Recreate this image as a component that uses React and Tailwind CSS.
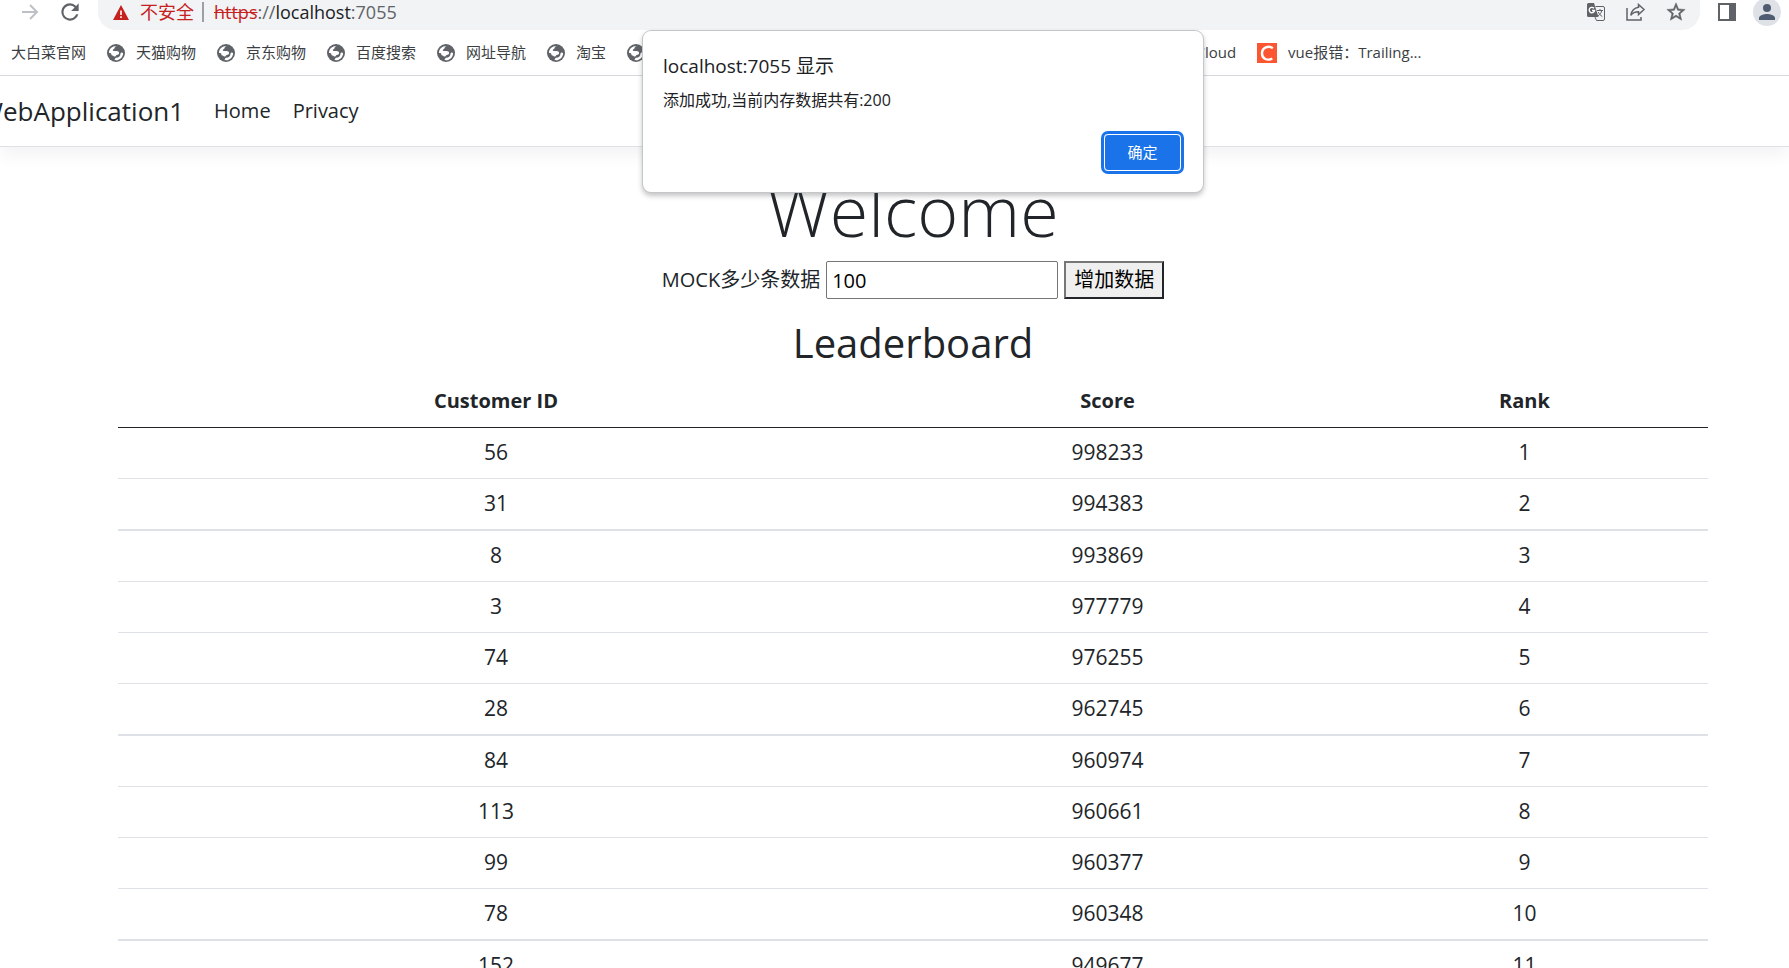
import React from "react";

const rows = [
  [56, 998233, 1],
  [31, 994383, 2],
  [8, 993869, 3],
  [3, 977779, 4],
  [74, 976255, 5],
  [28, 962745, 6],
  [84, 960974, 7],
  [113, 960661, 8],
  [99, 960377, 9],
  [78, 960348, 10],
  [152, 949677, 11],
];

const iconButton = "flex size-6 items-center justify-center";

function Globe() {
  return (
    <svg viewBox="0 0 18 18" className="size-[18px] shrink-0" aria-hidden="true">
      <circle cx="9" cy="9" r="9" fill="#5f6368" />
      <path
        d="M9.500 1.900C8.300 2.500 7.600 3.200 7.600 4.100c0 .8-.9 1-1.500 1.400-.6.500-.2 1.500.6 1.500h2.800c1.700 0 2.600.9 2.600 2.100 0 1.500-1.300 1.800-2.300 2-1 .2-1 1.500-1.700 1.500-1.200 0-1.600-1.100-2.600-1.200-1-.1-1.200-.7-1.200-1.500 0-.6-.8-.9-2.300-1C1.900 4.900 5 1.900 9.500 1.900zM7 15.800c.7-.1 1-.5 1.200-1.300.3-.9 1.600-.6 2.500-1 1.600-.6 2.700-1.800 2.700-3.600 0-.9.700-1.500 1.500-1.500.5 0 .9.300 1.200.8-.1 3.800-3.200 7.100-7.100 7.100-.7 0-1.300-.2-2-.5z"
        fill="#fff"
      />
    </svg>
  );
}

function Bookmark({ children, icon = <Globe /> }) {
  return (
    <a href="#" className="flex shrink-0 items-center gap-[11px] whitespace-nowrap">
      {icon}
      {children && <span>{children}</span>}
    </a>
  );
}

function Toolbar() {
  return (
    <div className="flex h-[30px] items-start overflow-hidden pr-2">
      <button aria-label="Forward" className="ml-[18px] flex h-6 w-6 items-center justify-center">
        <svg viewBox="0 0 24 24" className="size-6" fill="none" stroke="#bdc1c6" strokeWidth="2">
          <path d="M4 12h15M12 5l7 7-7 7" />
        </svg>
      </button>
      <button aria-label="Reload" className="ml-4 flex h-6 w-6 items-center justify-center">
        <svg viewBox="0 0 24 24" className="size-[26px] shrink-0" fill="#5f6368">
          <path d="M17.650 6.350A7.960 7.960 0 0 0 12 4a8 8 0 1 0 7.730 10h-2.080A6 6 0 1 1 12 6c1.660 0 3.140.690 4.220 1.780L13 11h7V4z" />
        </svg>
      </button>
      <div className="-mt-[6px] ml-4 flex h-9 flex-1 items-center rounded-b-[18px] bg-[#f1f3f4] pr-3 pl-[15px] text-lg leading-6">
        <svg viewBox="0 0 16 15" className="mr-[11px] h-[15px] w-4" aria-hidden="true">
          <path d="M8 0l8 15H0z" fill="#c5221f" />
          <path d="M7.200 5.500h1.600v4.500H7.200zM7.200 11.300h1.600v1.700H7.200z" fill="#fff" />
        </svg>
        <span className="text-[#c5221f]">不安全</span>
        <span className="mr-[10px] ml-2 h-5 w-[2px] bg-[#9aa0a6]" />
        <span className="flex-1 text-[#5f6368]">
          <span className="text-[#c5221f] line-through">https</span>://
          <span className="text-[#202124]">localhost</span>:7055
        </span>
        <div className="flex items-center gap-4">
          <button aria-label="Translate" className={iconButton}>
            <svg viewBox="0 0 18 18" className="size-[18px]">
              <path d="M8.500 3.500H16a1.500 1.500 0 0 1 1.500 1.500v11a1.500 1.500 0 0 1-1.500 1.500H9.500L8 14" fill="none" stroke="#5f6368" />
              <path d="M1.500 0H7l4.500 14H1.500A1.500 1.500 0 0 1 0 12.500v-11A1.500 1.500 0 0 1 1.500 0z" fill="#5f6368" />
              <path d="M7 5.300a2.700 2.700 0 1 0 .6 2.200H5" fill="none" stroke="#fff" strokeWidth="1.400" />
              <path d="M10 7.500h6M13 6v1.500M14.800 7.500c-.5 2.500-2 4-3.800 5.500M11.300 9c.8 2 2.200 3.300 4 4.500" fill="none" stroke="#5f6368" />
            </svg>
          </button>
          <button aria-label="Share" className={iconButton}>
            <svg viewBox="0 0 20 18" className="h-[18px] w-5" fill="none" stroke="#5f6368" strokeWidth="1.500">
              <path d="M1 5v12h14v-3" />
              <path d="M12.500 1.500L18 6.500l-5.500 5V8.800C9 8.800 6.500 10 4.800 12.300 5.500 8.500 8 5 12.500 4.300z" />
            </svg>
          </button>
          <button aria-label="Bookmark" className={iconButton}>
            <svg viewBox="0 0 24 24" className="size-[22px]" fill="#5f6368" stroke="#5f6368" strokeWidth="0.500">
              <path d="M22 9.240l-7.190-.620L12 2 9.190 8.630 2 9.240l5.460 4.730L5.820 21 12 17.270 18.180 21l-1.630-7.030L22 9.240zM12 15.400l-3.760 2.270 1-4.280-3.320-2.880 4.380-.380L12 6.100l1.710 4.040 4.380.380-3.320 2.880 1 4.280L12 15.400z" />
            </svg>
          </button>
        </div>
      </div>
      <button aria-label="Side panel" className="ml-[15px] flex size-6 items-center justify-center">
        <svg viewBox="0 0 18 18" className="size-[18px]">
          <path d="M0 0h18v18H0z" fill="#5f6368" />
          <path d="M2 2h9v14H2z" fill="#fff" />
        </svg>
      </button>
      <button aria-label="Profile" className="-mt-[2px] ml-[14px] size-7 rounded-full bg-[#dee1e6]">
        <svg viewBox="0 0 28 28" className="size-7" fill="#4f5b70">
          <circle cx="14" cy="10" r="4" />
          <path d="M6 22v-2c0-2.700 5.300-4 8-4s8 1.300 8 4v2z" />
        </svg>
      </button>
    </div>
  );
}

function Bookmarks() {
  return (
    <div className="flex h-[46px] items-center gap-[21px] overflow-hidden border-b border-[#d8dade] pl-[11px] text-[15px] text-[#3c4043]">
      <Bookmark icon={null}>大白菜官网</Bookmark>
      <Bookmark>天猫购物</Bookmark>
      <Bookmark>京东购物</Bookmark>
      <Bookmark>百度搜索</Bookmark>
      <Bookmark>网址导航</Bookmark>
      <Bookmark>淘宝</Bookmark>
      <div className="flex w-[609px] shrink-0 justify-between">
        <Bookmark />
        <Bookmark icon={null}>Cloud</Bookmark>
      </div>
      <Bookmark
        icon={
          <svg viewBox="0 0 20 20" className="size-5 shrink-0" aria-hidden="true">
            <path d="M0 0h20v20H0z" fill="#fc5531" />
            <path d="M15.800 5.200C11.500 2 5 4.500 5 10.500c0 5.500 5.500 7.500 10.300 5" fill="none" stroke="#fff" strokeWidth="2.400" />
          </svg>
        }
      >
        vue报错：Trailing...
      </Bookmark>
    </div>
  );
}

function Alert() {
  return (
    <div
      role="alertdialog"
      aria-labelledby="alert-title"
      aria-describedby="alert-message"
      className="absolute top-[31px] left-[643px] flex w-[560px] flex-col rounded-lg bg-white px-5 pt-[21px] pb-5 text-[#202124] shadow-[0_0_0_1px_#c4c7ca,0_3px_5px_1px_rgba(60,64,67,0.3)]"
    >
      <h2 id="alert-title" className="text-[19px] leading-7">localhost:7055 显示</h2>
      <p id="alert-message" className="mt-[6px] text-base leading-7">添加成功,当前内存数据共有:200</p>
      <button className="mt-5 mr-[2px] mb-px h-[37px] w-[77px] self-end rounded-[4px] border border-white bg-[#1a73e8] text-[15px] text-white outline-3 outline-[#1a73e8]">
        确定
      </button>
    </div>
  );
}

export default function App() {
  return (
    <div className="relative h-screen overflow-hidden bg-white font-['Open_Sans','Noto_Sans_CJK_SC',sans-serif] text-[#212529]">
      <Toolbar />
      <Bookmarks />
      <nav className="flex h-[71px] items-center border-b border-[#dee2e6] text-xl shadow-[0_8px_16px_rgba(0,0,0,0.05)]">
        <a href="#" className="-ml-[21px] text-[26px]">WebApplication1</a>
        <a href="#" className="ml-[30px]">Home</a>
        <a href="#" className="ml-[22px]">Privacy</a>
      </nav>
      <main className="pr-[81px] pl-[118px] text-center text-xl">
        <h1 className="mt-5 text-[70px] leading-[86px] font-light">Welcome</h1>
        <div className="mt-2 flex items-center justify-center gap-[6px]">
          <label htmlFor="count">MOCK多少条数据</label>
          <input id="count" type="text" defaultValue="100" className="h-[38px] w-[232px] rounded-[2px] border border-[#767676] px-[5px] text-black" />
          <button className="h-[38px] border-2 border-t-[#767676] border-r-[#212529] border-b-[#212529] border-l-[#767676] bg-[#efefef] px-2 text-black">增加数据</button>
        </div>
        <h2 className="mt-[18px] text-[40px] leading-[52px]">Leaderboard</h2>
        <table className="mt-[7px] w-full table-fixed border-collapse text-[21px]">
          <thead>
            <tr className="h-[51px] border-b border-[#212529]">
              <th className="w-[756px] text-xl font-bold">Customer ID</th>
              <th className="w-[467px] text-xl font-bold">Score</th>
              <th className="text-xl font-bold">Rank</th>
            </tr>
          </thead>
          <tbody>
            {rows.map(([id, score, rank]) => (
              <tr key={rank} className={rank % 4 === 2 ? "h-[52px] border-b-2 border-[#dee2e6]" : "h-[51px] border-b border-[#dee2e6]"}>
                <td>{id}</td>
                <td>{score}</td>
                <td>{rank}</td>
              </tr>
            ))}
          </tbody>
        </table>
      </main>
      <Alert />
    </div>
  );
}
